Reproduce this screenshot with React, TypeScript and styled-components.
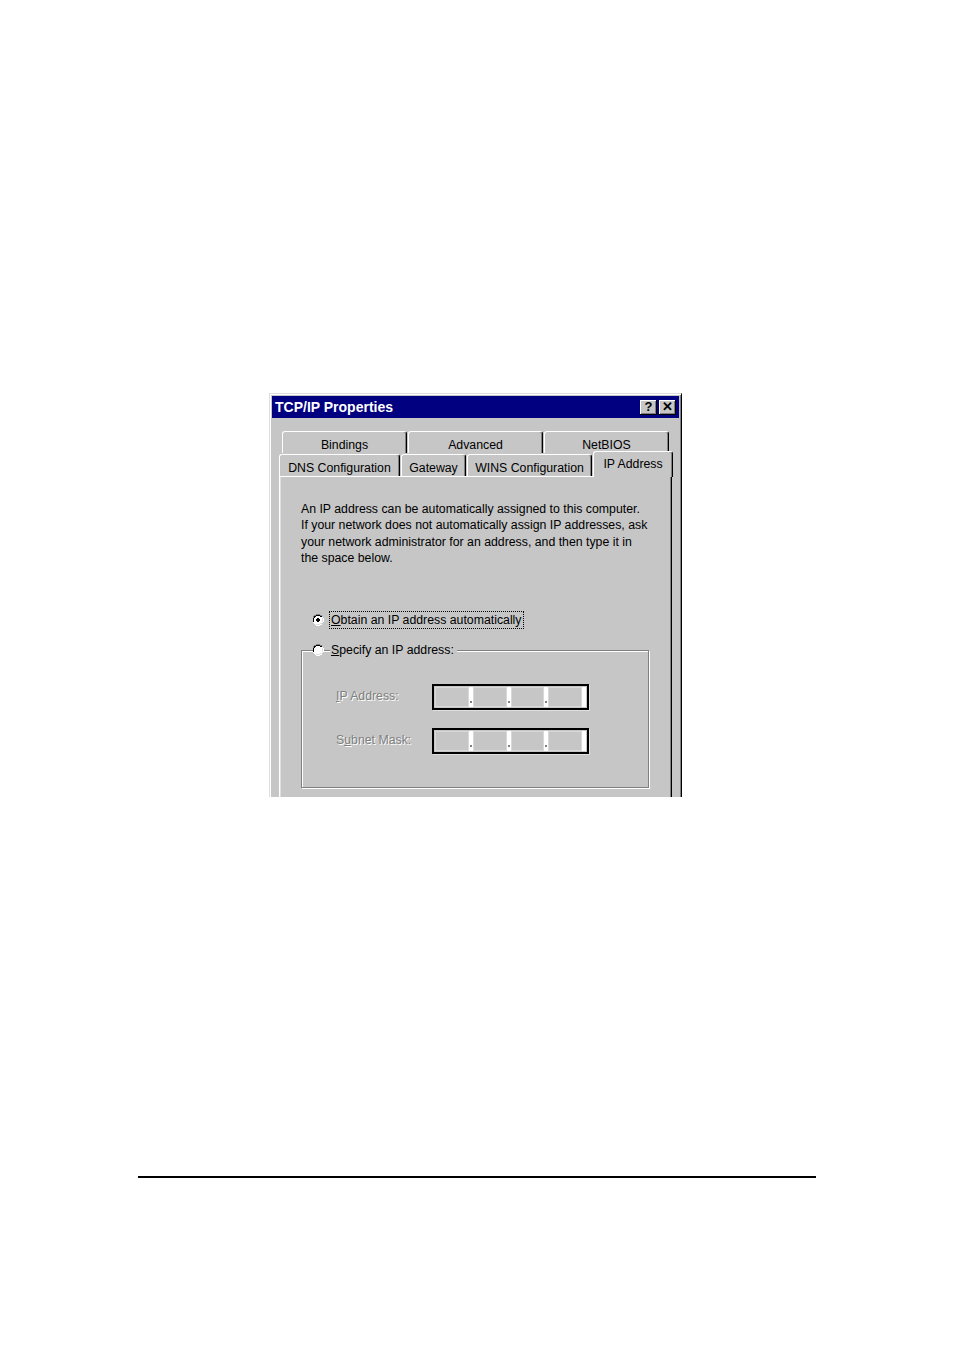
import React from "react";
import styled, { createGlobalStyle } from "styled-components";

const Global = createGlobalStyle`
  html, body { margin: 0; padding: 0; background: #ffffff; }
  body { font-family: "Liberation Sans", Arial, sans-serif; }
`;

const Page = styled.div`
  width: 954px;
  height: 1350px;
  padding-top: 393px;
  box-sizing: border-box;
  display: flex;
  flex-direction: column;
`;

const Dialog = styled.div`
  flex-shrink: 0;
  margin-left: 269px;
  width: 413px;
  height: 404px;
  box-sizing: border-box;
  overflow: hidden;
  background: #c6c6c6;
  border-top: 1px solid #dfdfdf;
  border-left: 1px solid #dfdfdf;
  border-right: 1px solid #000;
  box-shadow: inset 1px 1px 0 #ffffff, inset -1px 0 0 #808080;
  padding: 2px 2px 0 2px;
  display: flex;
  flex-direction: column;
`;

const TitleBar = styled.div`
  flex-shrink: 0;
  height: 22px;
  background: #000080;
  display: flex;
  align-items: center;
  padding: 0 3px 0 3px;
  color: #fff;
  font-weight: bold;
  font-size: 14px;
`;

const TitleText = styled.div`
  flex: 1;
`;

const TitleButton = styled.div<{ $gap?: boolean }>`
  width: 17px;
  height: 15px;
  box-sizing: border-box;
  background: #c6c6c6;
  color: #000;
  margin-left: ${(p) => (p.$gap ? "2px" : "0")};
  box-shadow: inset -1px -1px 0 #000, inset 1px 1px 0 #fff, inset -2px -2px 0 #808080;
  display: flex;
  align-items: center;
  justify-content: center;
  font-size: 13px;
  font-weight: bold;
  line-height: 1;
  padding-bottom: 1px;
`;

const Body = styled.div`
  flex-shrink: 0;
  padding: 13px 0 0 7px;
  display: flex;
  flex-direction: column;
`;

const TabRow = styled.div<{ $indent: number; $h: number }>`
  flex-shrink: 0;
  display: flex;
  height: ${(p) => p.$h}px;
  margin-left: ${(p) => p.$indent}px;
  align-items: flex-end;
  position: relative;
  z-index: 1;
`;

const Tab = styled.div<{ $w: number; $selected?: boolean }>`
  width: ${(p) => p.$w}px;
  height: ${(p) => (p.$selected ? 26 : 22)}px;
  margin-bottom: ${(p) => (p.$selected ? -1 : 0)}px;
  box-sizing: border-box;
  background: #c6c6c6;
  border-top: 1px solid #fff;
  border-left: 1px solid #fff;
  border-right: 1px solid #000;
  border-radius: 3px 3px 0 0;
  box-shadow: inset -1px 0 0 #808080;
  display: flex;
  align-items: ${(p) => (p.$selected ? "flex-start" : "center")};
  padding-top: ${(p) => (p.$selected ? 5 : 4)}px;
  justify-content: center;
  font-size: 12.3px;
  color: #000;
  white-space: nowrap;
  margin-right: 1px;
`;

const Panel = styled.div`
  flex-shrink: 0;
  width: 393px;
  height: 330px;
  box-sizing: border-box;
  border-top: 1px solid #fff;
  border-left: 1px solid #fff;
  border-right: 1px solid #000;
  box-shadow: inset -1px 0 0 #808080, inset 1px 0 0 #dfdfdf;
  padding: 24px 0 0 21px;
  display: flex;
  flex-direction: column;
`;

const Para = styled.p`
  margin: 0;
  font-size: 12.3px;
  line-height: 16.4px;
  color: #000;
  width: 365px;
`;

const RadioRow = styled.div<{ $mt: number }>`
  display: flex;
  align-items: center;
  margin-top: ${(p) => p.$mt}px;
  margin-left: 11px;
  height: 20px;
  position: relative;
  z-index: 1;
  font-size: 12.3px;
`;

const RadioLabel = styled.span<{ $focus?: boolean }>`
  margin-left: 6px;
  padding: 1px 1px;
  outline: ${(p) => (p.$focus ? "1px dotted #000" : "none")};
  outline-offset: 0;
  background: #c6c6c6;
  padding-right: ${(p) => (p.$focus ? 1 : 3)}px;
`;

const U = styled.span`
  text-decoration: underline;
`;

const Group = styled.div`
  flex-shrink: 0;
  margin-top: -10px;
  width: 348px;
  height: 138px;
  box-sizing: border-box;
  border: 1px solid #808080;
  box-shadow: 1px 1px 0 #fff, inset 1px 1px 0 #fff;
  padding: 33px 0 0 34px;
  display: flex;
  flex-direction: column;
  gap: 18px;
`;

const FieldRow = styled.div`
  display: flex;
  align-items: center;
  height: 26px;
`;

const FieldLabel = styled.span`
  width: 96px;
  font-size: 12.3px;
  color: #808080;
  text-shadow: 1px 1px 0 #fff;
  margin-top: -1px;
`;

const IpBox = styled.div`
  width: 157px;
  height: 26px;
  box-sizing: border-box;
  border: 2px solid #000;
  box-shadow: 1px 1px 0 #dfdfdf;
  background: #c6c6c6;
  display: flex;
  padding: 1px;
`;

const Segment = styled.div`
  flex: 1;
  box-shadow: inset 1px 1px 0 #d8d8d8, inset -1px -1px 0 #d8d8d8;
`;

const Dot = styled.div<{ $last?: boolean }>`
  width: 4px;
  background: #fff;
  position: relative;
  &::after {
    content: "";
    display: ${(p) => (p.$last ? "none" : "block")};
    position: absolute;
    left: 1px;
    bottom: 4px;
    width: 2px;
    height: 2px;
    background: #808080;
  }
`;

const Rule = styled.div`
  flex-shrink: 0;
  margin-top: 379px;
  margin-left: 138px;
  width: 678px;
  height: 2px;
  background: #000;
`;

const Radio: React.FC<{ checked?: boolean }> = ({ checked }) => (
  <svg width="12" height="12" viewBox="0 0 12 12" shapeRendering="crispEdges">
    <circle cx="6" cy="6" r="5.5" fill="#ffffff" />
    <path d="M4 0h4v1h2v1h-6v1h-1v1h-1v4h-1v-4H0V4h1V2h1V1h2z" fill="#808080" />
    <path d="M4 1h4v1h-4zM2 2h2v1h-1v1h-1zM8 2h2v1H8zM1 4h1v4H1z" fill="#000000" />
    <path d="M10 3h1v1h-1zM11 4h1v4h-1zM10 8h1v2h-2v1h-5v1h4v-1h2v-1h1V8z" fill="#ffffff" />
    <path d="M10 4h1v4h-1zM9 9h1v1H9zM4 10h4v-1h1v1H8v1H4z" fill="#dfdfdf" />
    {checked && <path d="M5 4h2v1h1v2h-1v1H5V7H4V5h1z" fill="#000000" />}
  </svg>
);

const IpField: React.FC = () => (
  <IpBox>
    <Segment />
    <Dot />
    <Segment />
    <Dot />
    <Segment />
    <Dot />
    <Segment />
    <Dot $last />
  </IpBox>
);

export default function App() {
  return (
    <>
      <Global />
      <Page>
        <Dialog>
          <TitleBar>
            <TitleText>TCP/IP Properties</TitleText>
            <TitleButton>?</TitleButton>
            <TitleButton $gap>✕</TitleButton>
          </TitleBar>
          <Body>
            <TabRow $indent={3} $h={22}>
              <Tab $w={125}>Bindings</Tab>
              <Tab $w={135}>Advanced</Tab>
              <Tab $w={125}>NetBIOS</Tab>
            </TabRow>
            <TabRow $indent={0} $h={23}>
              <Tab $w={121}>DNS Configuration</Tab>
              <Tab $w={65}>Gateway</Tab>
              <Tab $w={125}>WINS Configuration</Tab>
              <Tab $w={80} $selected>
                IP Address
              </Tab>
            </TabRow>
            <Panel>
              <Para>
                An IP address can be automatically assigned to this computer.
                <br />
                If your network does not automatically assign IP addresses, ask
                <br />
                your network administrator for an address, and then type it in
                <br />
                the space below.
              </Para>
              <RadioRow $mt={43}>
                <Radio checked />
                <RadioLabel $focus>
                  <U>O</U>btain an IP address automatically
                </RadioLabel>
              </RadioRow>
              <RadioRow $mt={10}>
                <Radio />
                <RadioLabel>
                  <U>S</U>pecify an IP address:
                </RadioLabel>
              </RadioRow>
              <Group>
                <FieldRow>
                  <FieldLabel>
                    <U>I</U>P Address:
                  </FieldLabel>
                  <IpField />
                </FieldRow>
                <FieldRow>
                  <FieldLabel>
                    S<U>u</U>bnet Mask:
                  </FieldLabel>
                  <IpField />
                </FieldRow>
              </Group>
            </Panel>
          </Body>
        </Dialog>
        <Rule />
      </Page>
    </>
  );
}
